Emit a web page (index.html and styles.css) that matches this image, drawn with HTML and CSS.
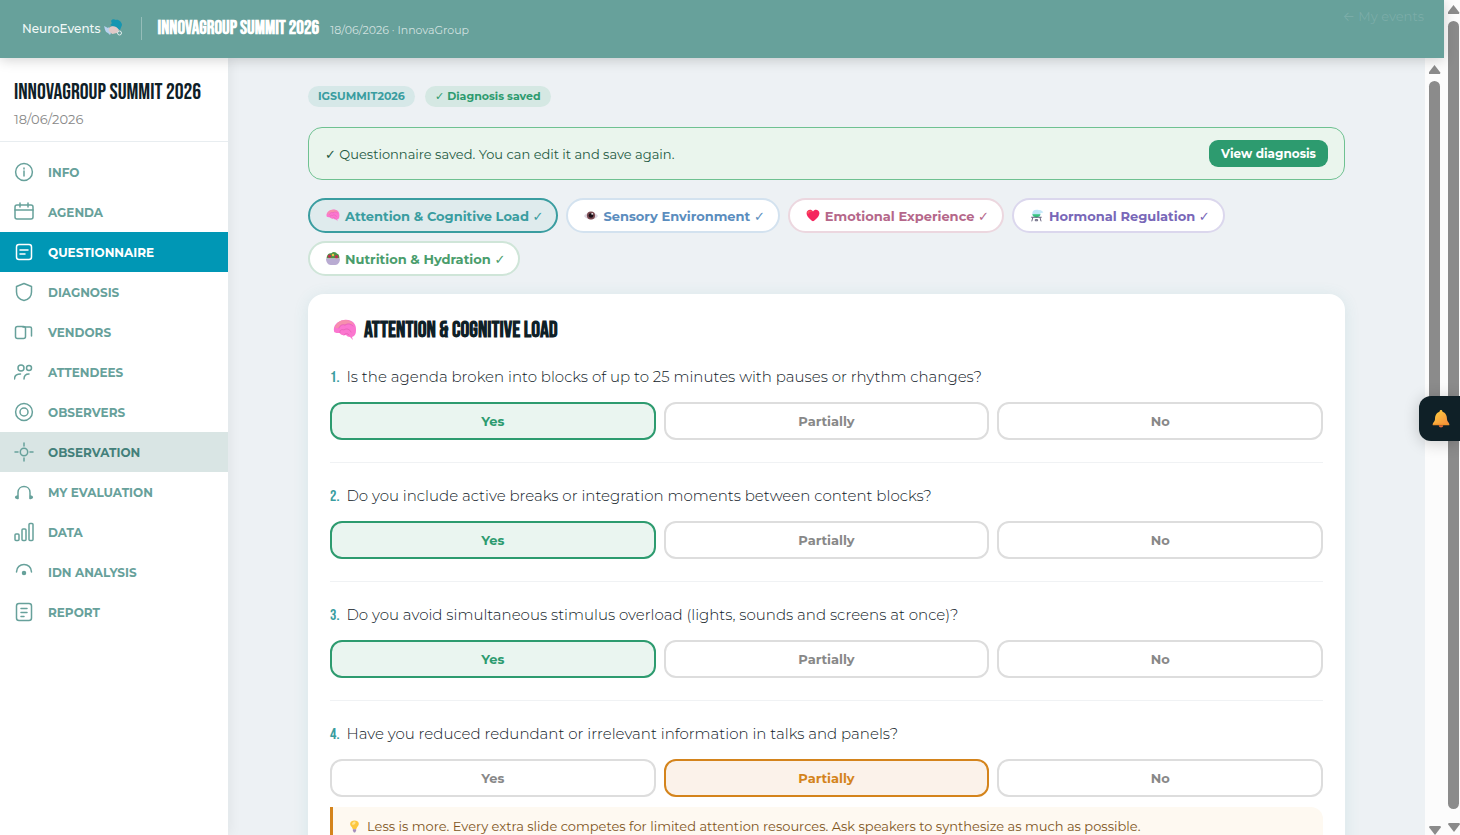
FILE: index.html
```html
<!DOCTYPE html>
<html lang="en">
  <head>
    <meta charset="UTF-8" />
    <meta name="viewport" content="width=device-width, initial-scale=1.0" />
    <title>NeuroEvents - Questionnaire</title>
    <link rel="stylesheet" href="styles.css">
  </head>
  <body>
    <!-- shared emoji symbols -->
    <svg class="symbols" aria-hidden="true">
      <defs>
        <linearGradient id="bell-fill" x1="0" x2="1" y1="0" y2="1">
          <stop offset="0" stop-color="#ffd23f" />
          <stop offset="1" stop-color="#f58a3c" />
        </linearGradient>
      </defs>
      <symbol id="brain" viewBox="0 0 24 22">
        <path fill="#fb76cf" d="M1 12C0 7 4 2 11 1c7-1 12 3 12 9 0 3 0 5-2 7l-2 1 1 3-3-3c-2 0-3-1-4-2-4 1-6-1-6-2-3 0-6 0-6-2z" />
        <path fill="#f68fae" d="M2 9c1-5 5-8 10-8 4 0 8 2 9 5-4-2-7-2-9 0-3-1-6 0-6 3z" />
        <path fill="none" stroke="#e560b4" stroke-width="0.8" stroke-linecap="round" d="M6 9c1-3 4-4 6-3m0 0c3-2 6-1 8 1M7 14c-1-3 2-4 4-3 2-2 6-1 7 2M11 16c1-2 4-2 5 0" />
      </symbol>
      <symbol id="eye" viewBox="0 0 24 22">
        <path fill="#dcd5e0" d="M0 12C5 4 19 4 24 12 19 20 5 20 0 12z" />
        <circle cx="12" cy="11" r="7" fill="#7a4a50" />
        <circle cx="12" cy="11" r="4" fill="#190f18" />
        <circle cx="14" cy="8" r="1.5" fill="#fff" />
      </symbol>
      <symbol id="heart" viewBox="0 0 24 22">
        <path fill="#f5265f" d="M12 21C7 18 1 12 1 7c0-6 8-8 11-3 3-5 11-3 11 3 0 5-6 11-11 14z" />
        <path fill="#fb5a5a" d="M2 6c1-4 7-4 9-1-3-1-6 0-7 4z" />
      </symbol>
      <symbol id="alembic" viewBox="0 0 24 22">
        <circle cx="11" cy="8" r="7" fill="#bfe6f8" />
        <path fill="#c5e9f9" d="M12 1c5 0 9 1 11 5l-6 1z" />
        <path fill="#35c67e" d="M4 9h14c-1 7-13 7-14 0z" />
        <path fill="none" stroke="#54506e" stroke-width="1.5" d="M2 14h18M5 14l-2 7m14-7 2 7M9 18h4v2H9z" />
      </symbol>
      <symbol id="salad" viewBox="0 0 24 22">
        <path fill="#4c9446" d="M1 11C1 6 4 1 9 2c4-4 9-1 10 1 4 1 4 5 4 8z" />
        <circle cx="6" cy="7" r="3" fill="#b83450" />
        <circle cx="18" cy="8" r="3" fill="#b83450" />
        <circle cx="12" cy="5" r="2" fill="#f3c445" />
        <path fill="#b9abd2" d="M0 11h24c0 6-3 11-8 11H8c-5 0-8-5-8-11z" />
      </symbol>
      <symbol id="bulb" viewBox="0 0 24 22">
        <path fill="#fdc73f" d="M12 0c-9 0-10 8-5 12l2 4h6l2-4c5-4 4-12-5-12z" />
        <path fill="#ffe493" d="M9 3c2-2 5-1 5 1 0 3-6 5-7 3z" />
        <path fill="#a58dbb" d="M9 16h6v3l-2 3h-2l-2-3z" />
      </symbol>
      <symbol id="bell" viewBox="0 0 24 24">
        <path fill="url(#bell-fill)" d="M10 3c0-3 4-3 4 0 4 1 6 5 6 10 0 3 3 4 3 7H1c0-3 3-4 3-7 0-5 2-9 6-10z" />
        <path fill="#f0952c" d="M1 19h22v2H1z" />
        <path fill="#e36a36" d="M9 21h6c0 4-6 4-6 0z" />
      </symbol>
    </svg>

    <div class="app">
      <header class="topbar">
        <a class="logo" href="#">
          <span>NeuroEvents</span>
          <svg class="logo-mark" viewBox="0 0 20 18">
            <path fill="#1696b1" d="M8 2c1-2 3-2 5-1 2-1 6 2 6 5l-2 5-4-2-6-3c2-1 2-2 1-4z" />
            <path fill="#b8d2ef" d="M1 7l4 2 1-1 2 6-1 2-2-2c-3-1-3-4-4-7z" />
            <path fill="#e1c9c7" d="M6 9c3-3 8-2 10 2l-2 3c-3 0-4 2-6 0-2-1-3-3-2-5z" />
            <circle cx="16.500" cy="14" r="2" fill="none" stroke="#e1ecec" />
          </svg>
        </a>
        <div class="topbar-event">
          <strong>INNOVAGROUP SUMMIT 2026</strong>
          <span>18/06/2026 · InnovaGroup</span>
        </div>
        <a class="back-link" href="#"><span class="arrow">←</span> My events</a>
      </header>

      <div class="workspace">
        <aside class="sidebar">
          <div class="sidebar-head">
            <h2>INNOVAGROUP SUMMIT 2026</h2>
            <p>18/06/2026</p>
          </div>
          <nav class="menu">
            <a href="#">
              <svg viewBox="0 0 20 20"><circle cx="10" cy="10" r="8.4" /><path d="M10 9v5M10 6v1" /></svg>
              INFO
            </a>
            <a href="#">
              <svg viewBox="0 0 20 20"><rect x="1" y="3" width="18" height="14" rx="2" /><path d="M1 8h18M6 1v4M14 1v4" /></svg>
              AGENDA
            </a>
            <a class="active" href="#">
              <svg viewBox="0 0 20 20"><rect x="2.5" y="2.5" width="15" height="15" rx="2.5" /><path d="M6 8h8M6 12h5" /></svg>
              QUESTIONNAIRE
            </a>
            <a href="#">
              <svg viewBox="0 0 20 20"><path d="M10 1.5l7.5 3V10c0 5-3 7.5-7.5 8.5C5.5 17.5 2.5 15 2.5 10V4.5z" /></svg>
              DIAGNOSIS
            </a>
            <a href="#">
              <svg viewBox="0 0 20 20"><rect x="1.5" y="4.5" width="10" height="12" rx="2" /><path d="M9 5h7a1.5 1.5 0 0 1 1.5 1.5V14" /></svg>
              VENDORS
            </a>
            <a href="#">
              <svg viewBox="0 0 20 20"><circle cx="7" cy="6" r="3" /><circle cx="15" cy="6" r="2.5" /><path d="M.5 17c0-3 2-5 6-5M10 17c0-3 2-5 5-5" /></svg>
              ATTENDEES
            </a>
            <a href="#">
              <svg viewBox="0 0 20 20"><circle cx="10" cy="10" r="8.4" /><circle cx="10" cy="10" r="4" /></svg>
              OBSERVERS
            </a>
            <a class="hover" href="#">
              <svg viewBox="0 0 20 20"><circle cx="10" cy="10" r="3.7" /><path d="M10 1v3M10 16v3M1 10h3M16 10h3" /></svg>
              OBSERVATION
            </a>
            <a href="#">
              <svg viewBox="0 0 20 20"><path d="M4 16.5v-6C4 2.5 16 2.5 16 10.5v6" /><path class="dot" d="M3.5 14v2.5C1 16 1 14.5 3.5 14zM16.5 14v2.5c2.5-.5 2.5-2 0-2.5z" /></svg>
              MY EVALUATION
            </a>
            <a href="#">
              <svg viewBox="0 0 20 20"><rect x="1" y="12" width="4" height="6.5" rx="1" /><rect x="8" y="7" width="4" height="11.5" rx="1" /><rect x="15" y="1.5" width="4" height="17" rx="1" /></svg>
              DATA
            </a>
            <a href="#">
              <svg viewBox="0 0 20 20"><path d="M2.5 10C2.5 0 17.5 0 17.5 10" /><circle class="dot" cx="10" cy="11" r="1.5" /></svg>
              IDN ANALYSIS
            </a>
            <a href="#">
              <svg viewBox="0 0 20 20"><rect x="2.5" y="1.5" width="15" height="17" rx="2.5" /><path d="M7 6.500h6M7 10.500h6M7 14.500h3" /></svg>
              REPORT
            </a>
          </nav>
        </aside>

        <main class="content">
          <div class="badges">
            <span class="badge badge-code">IGSUMMIT2026</span>
            <span class="badge badge-saved">✓ Diagnosis saved</span>
          </div>

          <div class="notice">
            <p>✓ Questionnaire saved. You can edit it and save again.</p>
            <button type="button" class="btn-view">View diagnosis</button>
          </div>

          <div class="tabs">
            <button type="button" class="tab tab-attention"><svg><use href="#brain" /></svg>Attention &amp; Cognitive Load ✓</button>
            <button type="button" class="tab tab-sensory"><svg><use href="#eye" /></svg>Sensory Environment ✓</button>
            <button type="button" class="tab tab-emotional"><svg><use href="#heart" /></svg>Emotional Experience ✓</button>
            <button type="button" class="tab tab-hormonal"><svg><use href="#alembic" /></svg>Hormonal Regulation ✓</button>
            <button type="button" class="tab tab-nutrition"><svg><use href="#salad" /></svg>Nutrition &amp; Hydration ✓</button>
          </div>

          <section class="card">
            <h1><svg><use href="#brain" /></svg>ATTENTION &amp; COGNITIVE LOAD</h1>

            <div class="question">
              <p><b>1.</b>Is the agenda broken into blocks of up to 25 minutes with pauses or rhythm changes?</p>
              <div class="options">
                <button type="button" class="option yes">Yes</button>
                <button type="button" class="option">Partially</button>
                <button type="button" class="option">No</button>
              </div>
            </div>

            <div class="question">
              <p><b>2.</b>Do you include active breaks or integration moments between content blocks?</p>
              <div class="options">
                <button type="button" class="option yes">Yes</button>
                <button type="button" class="option">Partially</button>
                <button type="button" class="option">No</button>
              </div>
            </div>

            <div class="question">
              <p><b>3.</b>Do you avoid simultaneous stimulus overload (lights, sounds and screens at once)?</p>
              <div class="options">
                <button type="button" class="option yes">Yes</button>
                <button type="button" class="option">Partially</button>
                <button type="button" class="option">No</button>
              </div>
            </div>

            <div class="question">
              <p><b>4.</b>Have you reduced redundant or irrelevant information in talks and panels?</p>
              <div class="options">
                <button type="button" class="option">Yes</button>
                <button type="button" class="option partial">Partially</button>
                <button type="button" class="option">No</button>
              </div>
              <div class="tip">
                <svg><use href="#bulb" /></svg>
                <span>Less is more. Every extra slide competes for limited attention resources. Ask speakers to synthesize as much as possible.</span>
              </div>
            </div>
          </section>
        </main>

        <div class="scrollbar scrollbar-inner" aria-hidden="true">
          <i class="arrow-up"></i>
          <i class="thumb"></i>
          <i class="arrow-down"></i>
        </div>
      </div>
    </div>

    <div class="scrollbar" aria-hidden="true">
      <i class="arrow-up"></i>
      <i class="thumb"></i>
      <i class="arrow-down"></i>
    </div>

    <button type="button" class="bell" aria-label="Notifications"><svg><use href="#bell" /></svg></button>
  </body>
</html>
```

FILE: styles.css
```css
:root {
  --topbar: #67a19b;
  --teal: #3a9da0;
  --green: #2d9b6f;
  --orange: #d4841c;
  --ink: #0f2027;
  --page-bg: #edf1f4;
  --display: "Bebas Neue", "Roboto Condensed", Roboto, sans-serif;
}

* {
  margin: 0;
  padding: 0;
  box-sizing: border-box;
}

body {
  display: flex;
  height: 100vh;
  overflow: hidden;
  background: var(--page-bg);
  color: var(--ink);
  font-family: Montserrat, "DejaVu Sans", sans-serif;
  font-size: 13px;
}

button {
  font-family: inherit;
  cursor: pointer;
}

a {
  text-decoration: none;
}

.symbols {
  position: absolute;
  width: 0;
  height: 0;
}

.app {
  flex: 1;
  min-width: 0;
  display: flex;
  flex-direction: column;
}

/* Top bar */
.topbar {
  position: relative;
  z-index: 2;
  flex: none;
  display: flex;
  align-items: center;
  height: 58px;
  padding: 0 20px 2px 22px;
  background: var(--topbar);
  box-shadow: 0 2px 12px rgba(0, 0, 0, 0.18);
}

.logo {
  display: flex;
  align-items: center;
  gap: 2px;
  padding-right: 18px;
  color: #f1f8f7;
  font-size: 12px;
  font-weight: 500;
}

.logo-mark {
  width: 20px;
  height: 18px;
}

.topbar-event {
  display: flex;
  align-items: baseline;
  gap: 11px;
  padding-left: 16px;
  border-left: 1px solid rgba(255, 255, 255, 0.3);
  color: rgba(255, 255, 255, 0.7);
  font-size: 11px;
}

.topbar-event strong {
  color: #fff;
  font-family: var(--display);
  font-size: 19px;
}

.back-link {
  align-self: flex-start;
  margin-left: auto;
  padding-top: 8px;
  color: rgba(255, 255, 255, 0.14);
}

.back-link .arrow {
  font-family: Inter, sans-serif;
}

/* Sidebar */
.workspace {
  flex: 1;
  display: flex;
  min-height: 0;
}

.sidebar {
  flex: none;
  width: 228px;
  background: #fff;
  box-shadow: 2px 0 12px rgba(15, 32, 39, 0.06);
}

.sidebar-head {
  height: 84px;
  padding: 21px 14px 0;
  border-bottom: 1px solid #e8edf0;
}

.sidebar-head h2 {
  font-family: var(--display);
  font-size: 22px;
  font-weight: 400;
  line-height: 28px;
}

.sidebar-head p {
  color: #888;
  line-height: 24px;
}

.menu {
  padding-top: 10px;
}

.menu a {
  display: flex;
  align-items: center;
  gap: 14px;
  height: 40px;
  padding: 0 14px;
  color: var(--topbar);
  font-size: 12px;
  font-weight: 700;
}

.menu svg {
  width: 20px;
  height: 20px;
  fill: none;
  stroke: currentColor;
  stroke-width: 1.5;
  stroke-linecap: round;
  stroke-linejoin: round;
}

.menu .dot {
  fill: currentColor;
}

.menu a.active {
  background: #0097b5;
  color: #fff;
}

.menu a.hover {
  background: #d9e5e4;
  color: #43807a;
}

.menu a.hover svg {
  color: var(--topbar);
}

/* Content */
.content {
  flex: 1;
  min-width: 0;
  padding: 28px 80px 0;
  overflow: hidden;
}

.badges {
  display: flex;
  align-items: center;
  gap: 10px;
}

.badge {
  padding: 0 10px;
  border-radius: 11px;
  font-size: 11px;
  font-weight: 700;
  line-height: 21px;
}

.badge-code {
  background: #d6e8e8;
  color: var(--teal);
}

.badge-saved {
  background: #d5e8e3;
  color: var(--green);
}

.notice {
  display: flex;
  align-items: center;
  justify-content: space-between;
  margin-top: 20px;
  padding: 12px 16px;
  border: 1px solid #6fc191;
  border-radius: 14px;
  background: #eaf5ed;
  color: #245a43;
}

.btn-view {
  padding: 0 12px;
  border: none;
  border-radius: 9px;
  background: var(--green);
  color: #fff;
  font-size: 12px;
  font-weight: 700;
  line-height: 27px;
}

.tabs {
  display: flex;
  flex-wrap: wrap;
  gap: 8px;
  margin: 18px 0;
}

.tab {
  display: flex;
  align-items: center;
  gap: 5px;
  height: 35px;
  padding: 0 13px 0 16px;
  border: 2px solid;
  border-radius: 18px;
  background: #fff;
  font-size: 13px;
  font-weight: 700;
}

.tab svg {
  width: 14px;
  height: 13px;
}

.tab-attention {
  border-color: var(--teal);
  background: #dfebed;
  color: var(--teal);
}

.tab-sensory {
  border-color: #d3e2ef;
  color: #5b8dbe;
}

.tab-emotional {
  border-color: #ecd7df;
  color: #b5678a;
}

.tab-hormonal {
  border-color: #dbd7ed;
  color: #7867b8;
}

.tab-nutrition {
  border-color: #cfe5d8;
  color: #4a9d6c;
}

/* Questionnaire card */
.card {
  padding: 22px;
  border-radius: 16px;
  background: #fff;
  box-shadow: 0 2px 16px rgba(58, 157, 160, 0.12);
}

.card h1 {
  display: flex;
  align-items: center;
  gap: 7px;
  height: 28px;
  padding-left: 3px;
  font-family: var(--display);
  font-size: 22px;
}

.card h1 svg {
  width: 24px;
  height: 22px;
}

.question {
  padding: 21px 0 22px;
  border-bottom: 1px solid #f0f2f4;
}

.question p {
  margin-bottom: 14px;
  font-size: 15px;
  font-weight: 300;
  line-height: 23px;
}

.question p b {
  margin-right: 7px;
  color: var(--teal);
  font-family: var(--display);
  font-size: 16px;
  font-weight: 400;
  line-height: 1;
}

.options {
  display: grid;
  grid-template-columns: repeat(3, 1fr);
  gap: 8px;
}

.option {
  height: 38px;
  border: 2px solid #ddd;
  border-radius: 12px;
  background: #fff;
  color: #888;
  font-size: 13px;
  font-weight: 700;
}

.option.yes {
  border-color: var(--green);
  background: #eaf5f0;
  color: var(--green);
}

.option.partial {
  border-color: var(--orange);
  background: #fbf2ea;
  color: var(--orange);
}

.tip {
  display: flex;
  align-items: center;
  gap: 6px;
  margin-top: 10px;
  padding: 10px 15px;
  border-left: 3px solid var(--orange);
  border-radius: 0 12px 12px 0;
  background: #fef9f1;
  color: #80561d;
  line-height: 18px;
}

.tip svg {
  width: 13px;
  height: 13px;
}

/* Scrollbars */
.scrollbar {
  flex: none;
  display: flex;
  flex-direction: column;
  align-items: center;
  gap: 7px;
  width: 16px;
  padding: 5px 0 3px 3px;
  background: #fcfcfc;
}

.scrollbar-inner {
  width: 19px;
  padding: 7px 0 0;
}

.thumb {
  flex: 1;
  width: 11px;
  margin-bottom: 7px;
  border-radius: 6px;
  background: #8b8b8b;
}

.scrollbar-inner .thumb {
  flex: none;
  height: 45%;
}

.scrollbar-inner .arrow-down {
  margin-top: auto;
}

.arrow-up,
.arrow-down {
  flex: none;
  width: 12px;
  height: 9px;
  background: #8b8b8b;
  clip-path: polygon(50% 0, 100% 85%, 95% 100%, 5% 100%, 0 85%);
}

.arrow-down {
  transform: rotate(180deg);
}

/* Floating notifications button */
.bell {
  position: fixed;
  z-index: 3;
  top: 396px;
  right: 0;
  display: flex;
  align-items: center;
  width: 41px;
  height: 45px;
  padding-left: 13px;
  border: none;
  border-radius: 12px 0 0 12px;
  background: var(--ink);
  box-shadow: 0 2px 16px rgba(0, 0, 0, 0.2);
}

.bell svg {
  width: 18px;
  height: 19px;
}
```
